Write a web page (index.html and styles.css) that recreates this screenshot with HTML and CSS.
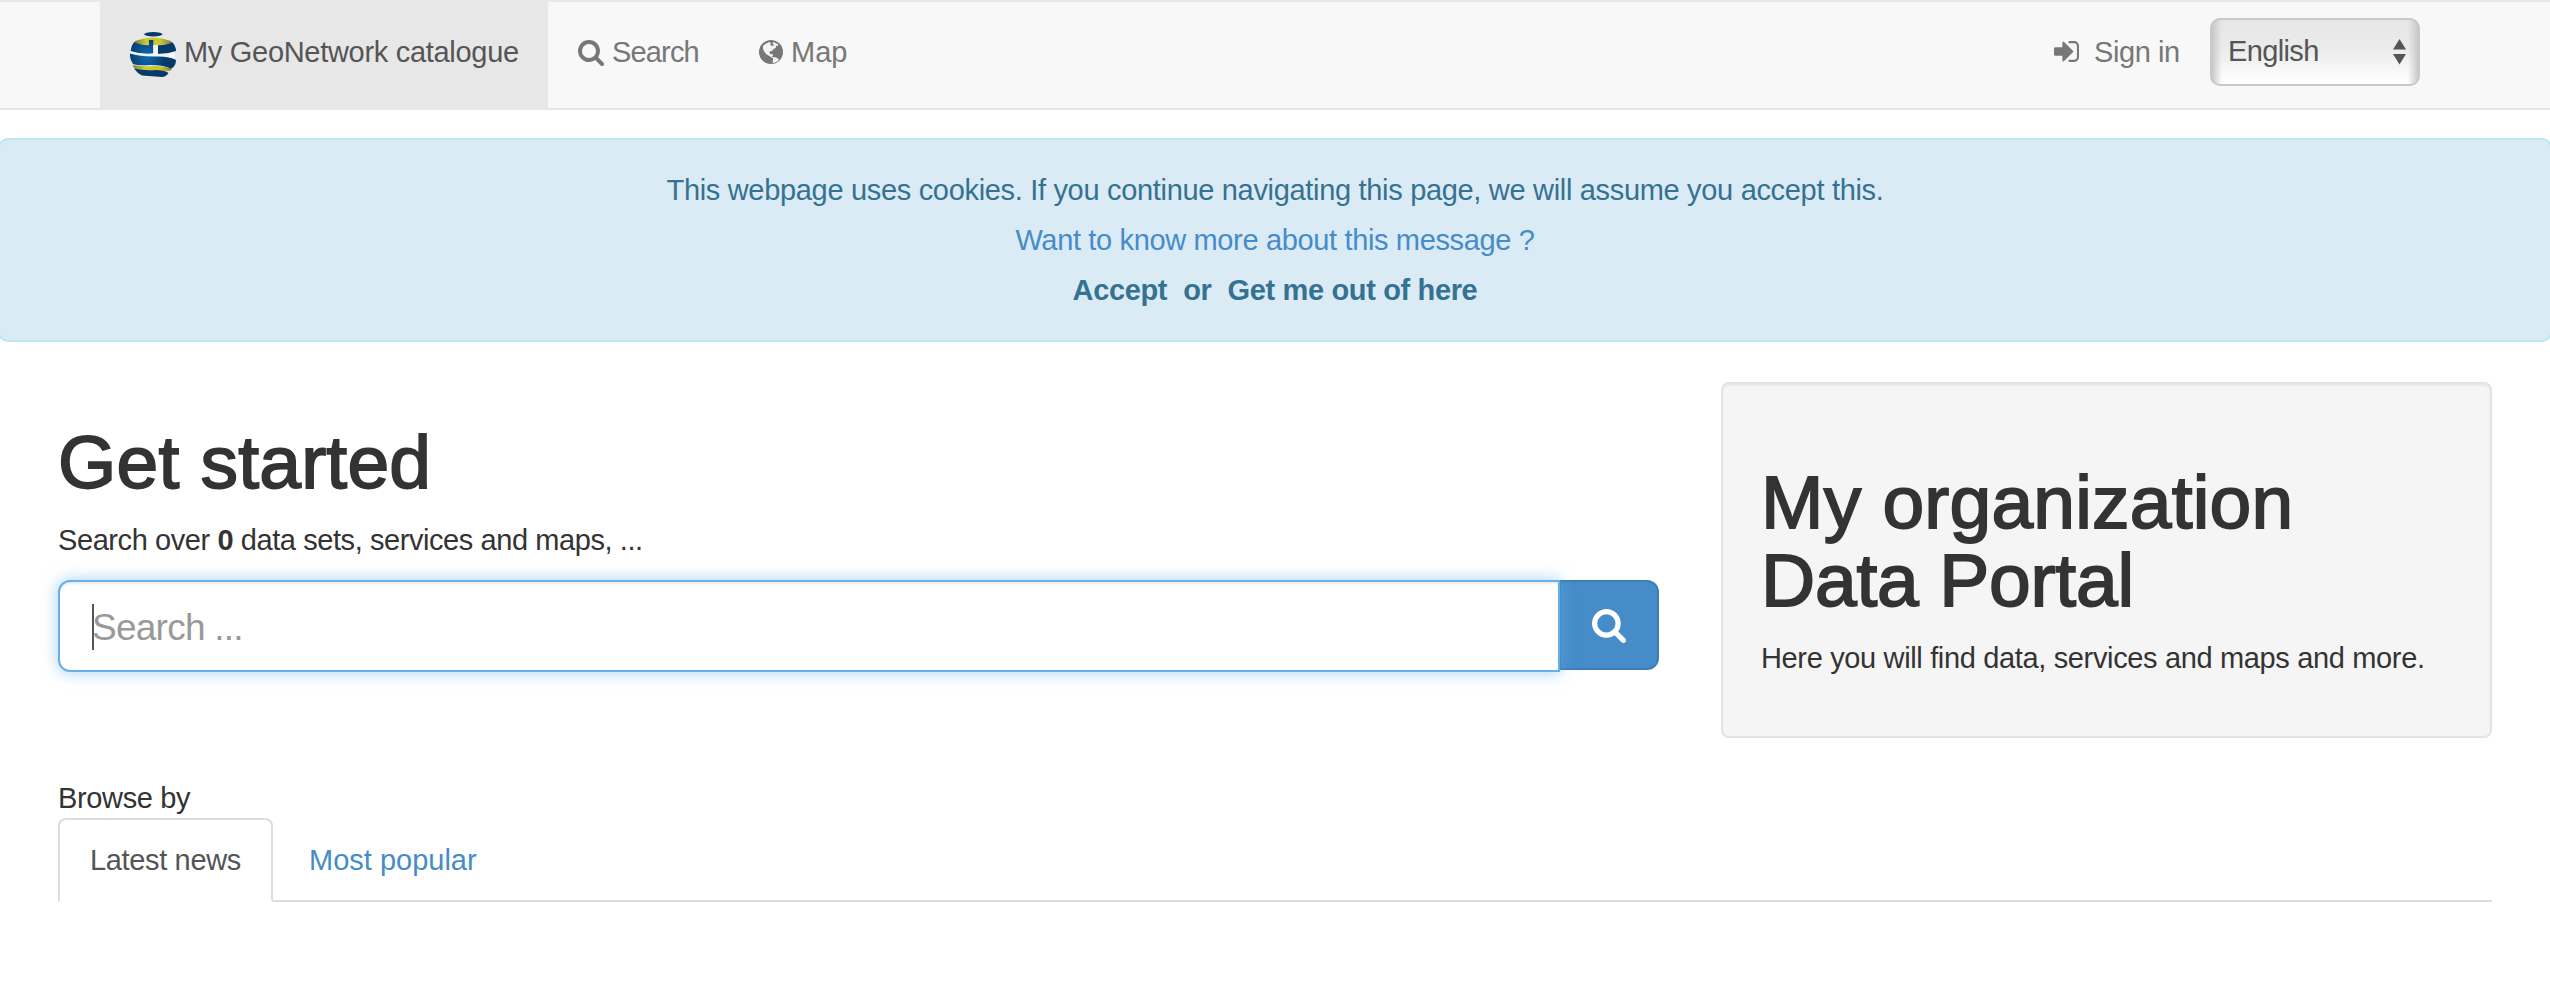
FILE: index.html
```html
<!DOCTYPE html>
<html lang="en">
<head>
<meta charset="utf-8">
<title>My GeoNetwork catalogue</title>
<link rel="stylesheet" href="styles.css">
</head>
<body>
<nav class="navbar">
  <a class="brand">
    <svg class="logo" viewBox="0 0 46 46">
      <defs>
        <radialGradient id="sea" gradientUnits="userSpaceOnUse" cx="17" cy="24" r="19"><stop offset="0" stop-color="#0d6cb4"/><stop offset="1" stop-color="#053a6b"/></radialGradient>
        <linearGradient id="land"><stop offset="0" stop-color="#7d7a3c"/><stop offset=".3" stop-color="#c9c82c"/><stop offset=".7" stop-color="#c9c82c"/><stop offset="1" stop-color="#85803d"/></linearGradient>
      </defs>
      <ellipse cx="23.3" cy="2.2" rx="9.2" ry="2.2" fill="#053a6b"/>
      <path d="M5 9Q23 2 41 9Q42 11 37 12Q23 14.500 9 12Q4 11 5 9Z" fill="url(#land)"/>
      <path d="M4 10Q10 13 19 13.300V8H23.300V21.500Q10 22.500 .6 19Q1 14 4 10Z" fill="url(#sea)"/>
      <path d="M28 13.300Q38 13 42 10Q46 14 46 19Q38 22 28 21.700Z" fill="#053a6b"/>
      <path d="M23.300 13H28V22.500Q37 23 44 20L46 26Q22 25 0 22V19Q12 23 23.300 21.500Z" fill="#f4f5f5"/>
      <path d="M0 21.500Q10 25 28 24.500Q40 24.500 46 28Q46 34 41 37Q35 33 20 33Q8 34 3 32Q-.5 27 0 21.500Z" fill="url(#sea)"/>
      <path d="M2.500 33Q12 35 24 34Q36 34 42 37Q41 39 38 39Q18 38 8 38Q4 37 2.500 33Z" fill="url(#land)"/>
      <path d="M4 36.500Q14 39 26 38Q35 38 38.500 41Q36 45 32 45L12 43.500Q7 41 4 36.500Z" fill="#053a6b"/>
    </svg>
    <span class="brand-name">My GeoNetwork catalogue</span>
  </a>
  <a class="nav-link nav-search">
    <svg class="icon-search" viewBox="64 128 1664 1664"><path d="M1216 832q0-185-131.500-316.500t-316.500-131.500-316.500 131.500-131.500 316.500 131.500 316.500 316.500 131.500 316.500-131.500 131.500-316.500zm512 832q0 52-38 90t-90 38q-54 0-90-38l-343-342q-179 124-399 124-143 0-273.500-55.500t-225-150-150-225-55.500-273.500 55.500-273.500 150-225 225-150 273.500-55.500 273.500 55.500 225 150 150 225 55.500 273.500q0 220-124 399l343 343q37 37 37 90z"/></svg>
    <span>Search</span>
  </a>
  <a class="nav-link nav-map">
    <svg class="icon-globe" viewBox="0 0 72 72"><circle cx="36" cy="36" r="36"/><path class="cut" d="M12 18L20 11 32 6 36 10 33 15 41 18 45 14 40 10 43 6 56 12 58 18 50 17 51 23 44 27 38 34 34 33 31 38 35 43 41 42 42 47 38 48 44 53 40 54 30 47 22 43 15 34 12 26ZM42 52L50 52 59 57 57 63 47 68 40 68 42 61Z"/></svg>
    <span>Map</span>
  </a>
  <a class="nav-link nav-signin">
    <svg class="icon-signin" viewBox="128 256 1536 1280"><path d="M1312 896q0 26-19 45l-544 544q-19 19-45 19t-45-19-19-45v-288h-448q-26 0-45-19t-19-45v-384q0-26 19-45t45-19h448v-288q0-26 19-45t45-19 45 19l544 544q19 19 19 45zm352-352v704q0 119-84.500 203.500t-203.500 84.500h-320q-13 0-22.500-9.500t-9.500-22.500q0-4-1-20t-.5-26.500 3-23.500 10-19.500 20.500-6.500h320q66 0 113-47t47-113v-704q0-66-47-113t-113-47h-312l-11.500-1-11.500-3-8-5.500-7-9-2-13.500q0-4-1-20t-.5-26.500 3-23.500 10-19.500 20.500-6.500h320q119 0 203.500 84.500t84.500 203.500z"/></svg>
    <span>Sign in</span>
  </a>
  <div class="language">
    <span>English</span>
    <svg class="arrows" viewBox="0 0 13 26"><path d="M6.500 0L13 10.500H0ZM0 15H13L6.500 25.500Z"/></svg>
  </div>
</nav>

<section class="cookies">
  <div class="cookie-text">This webpage uses cookies. If you continue navigating this page, we will assume you accept this.</div>
  <div><a class="link">Want to know more about this message ?</a></div>
  <div class="choices"><b>Accept</b><b>or</b><b>Get me out of here</b></div>
</section>

<main>
  <div class="columns">
    <section class="start">
      <h1>Get started</h1>
      <p>Search over <b>0</b> data sets, services and maps, ...</p>
      <div class="search">
        <div class="field"><i class="caret"></i><span class="placeholder">Search ...</span></div>
        <div class="button">
          <svg class="icon-go" viewBox="64 128 1664 1664"><path d="M1216 832q0-185-131.500-316.500t-316.500-131.500-316.500 131.500-131.500 316.500 131.500 316.500 316.500 131.500 316.500-131.500 131.500-316.500zm512 832q0 52-38 90t-90 38q-54 0-90-38l-343-342q-179 124-399 124-143 0-273.500-55.500t-225-150-150-225-55.500-273.500 55.500-273.500 150-225 225-150 273.500-55.500 273.500 55.500 225 150 150 225 55.500 273.500q0 220-124 399l343 343q37 37 37 90z"/></svg>
        </div>
      </div>
    </section>
    <aside class="well">
      <h1>My organization<br><span class="portal">Data Portal</span></h1>
      <p>Here you will find data, services and maps and more.</p>
    </aside>
  </div>
  <div class="browse">Browse by</div>
  <div class="tabs">
    <a class="tab active">Latest news</a>
    <a class="tab popular">Most popular</a>
  </div>
</main>
</body>
</html>
```
FILE: styles.css
```css
* { box-sizing: border-box; }
body {
  margin: 0;
  overflow-x: hidden;
  background: #fff;
  color: #333;
  font: 29px/40px "Liberation Sans", Arial, sans-serif;
  letter-spacing: -0.35px;
}
svg { display: block; flex: none; fill: currentColor; }
p, h1 { margin: 0; white-space: nowrap; }

/* Navigation bar */
.navbar {
  display: flex;
  align-items: flex-start;
  height: 110px;
  padding: 0 130px 0 100px;
  background: #f8f8f8;
  border: solid #e7e7e7;
  border-width: 2px 0;
  color: #777;
  white-space: nowrap;
}
.brand {
  display: flex;
  width: 448px;
  height: 106px;
  padding: 30px 0 0 30px;
  gap: 8px;
  background: #e7e7e7;
  color: #555;
}
.logo { width: 46px; height: 46px; }
.brand-name { letter-spacing: -0.3px; }
.nav-link { display: flex; padding-top: 30px; }
.nav-link svg { margin-top: 8px; }
.nav-search { width: 181px; margin-left: 30px; gap: 8px; letter-spacing: -0.83px; }
.nav-map { gap: 7px; letter-spacing: 0; }
.nav-signin { width: 126px; margin: 0 30px 0 auto; gap: 15px; letter-spacing: -0.42px; }
.icon-search { width: 26px; height: 26px; }
.icon-globe { width: 24px; height: 24px; margin-right: 1px; }
.icon-globe .cut { fill: #f4f4f4; }
.nav-signin .icon-signin { width: 25px; height: 21px; margin-top: 9px; }
.language {
  display: flex;
  justify-content: space-between;
  width: 210px;
  height: 68px;
  margin-top: 16px;
  padding: 11px 12px 0 16px;
  border: 2px solid #c8c8c8;
  border-radius: 10px;
  background:
    linear-gradient(90deg, #c9c9c9, transparent 10px, transparent calc(100% - 10px), #c9c9c9),
    linear-gradient(#e6e6e6, #ebebeb 45%, #fff);
  color: #555;
  letter-spacing: -0.63px;
}
.arrows { width: 13px; height: 26px; margin-top: 8px; }

/* Cookie notice */
.cookies {
  margin: 28px -2px 0;
  padding: 25px 0;
  border: 2px solid #bce8f1;
  border-radius: 10px;
  background: #daebf5;
  color: #357291;
  line-height: 50px;
  text-align: center;
}
.cookie-text { letter-spacing: -0.32px; }
.link { color: #468cc8; }
.choices { display: flex; justify-content: center; gap: 16px; }

/* Page content */
main { padding: 40px 58px 0; }
.columns { display: flex; align-items: flex-start; gap: 62px; }
h1 {
  font-size: 75px;
  font-weight: 400;
  line-height: 78px;
  letter-spacing: 0.2px;
  -webkit-text-stroke: 1.8px currentColor;
}
.start { width: 1601px; padding-top: 41px; }
.start p, .well p { margin-top: 19px; }
.start p { letter-spacing: -0.42px; }
.search { display: flex; align-items: flex-start; margin-top: 20px; }
.field {
  position: relative;
  z-index: 1;
  display: flex;
  width: 1502px;
  height: 92px;
  margin-right: -1px;
  padding: 22px 32px;
  border: 2px solid #66afe9;
  border-radius: 12px 0 0 12px;
  background: #fff;
  box-shadow: inset 0 2px 2px rgba(0, 0, 0, .075), 0 0 16px rgba(102, 175, 233, .6);
}
.caret { width: 2px; height: 46px; margin-right: -2px; background: #555; }
.placeholder {
  color: #999;
  font-size: 37px;
  line-height: 48px;
  letter-spacing: -0.75px;
}
.button {
  width: 100px;
  height: 90px;
  padding: 27px 0 0 31px;
  border: 2px solid #3a7fb9;
  border-radius: 0 12px 12px 0;
  background: #468cc8;
  color: #fff;
}
.icon-go { width: 34px; height: 34px; }
.well {
  width: 771px;
  height: 356px;
  padding: 79px 38px 0;
  border: 2px solid #e3e3e3;
  border-radius: 8px;
  background: #f5f5f5;
  box-shadow: inset 0 2px 2px rgba(0, 0, 0, .05);
}
.portal { letter-spacing: -0.2px; }
.browse { margin-top: 40px; }

/* Tabs */
.tabs { display: flex; gap: 4px; border-bottom: 2px solid #ddd; }
.tab {
  height: 84px;
  margin-bottom: -2px;
  padding: 20px 0 0 30px;
  border: 2px solid transparent;
  border-radius: 8px 8px 0 0;
}
.active { width: 215px; border-color: #ddd #ddd #fff; background: #fff; color: #555; }
.popular { color: #468cc8; letter-spacing: 0; }
```
